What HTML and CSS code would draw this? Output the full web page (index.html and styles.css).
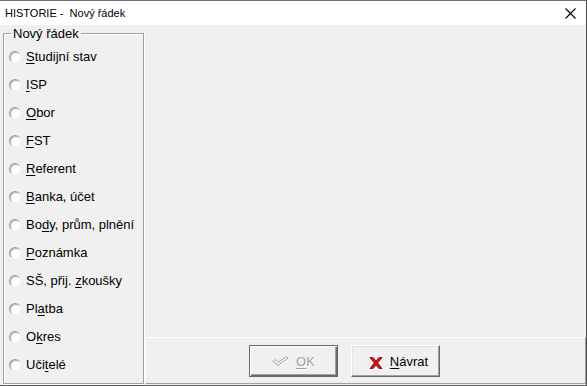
FILE: index.html
```html
<!DOCTYPE html>
<html lang="cs">
<head>
<meta charset="utf-8">
<title>HISTORIE - Nový řádek</title>
<link rel="stylesheet" href="styles.css">
</head>
<body>
<div class="window">
  <div class="titlebar">
    <span class="title">HISTORIE -  Nový řádek</span>
    <svg class="close" width="11" height="11" viewBox="0 0 11 11"><path d="M0.5 0.5 L10.5 10.5 M10.5 0.5 L0.5 10.5" stroke="#000" stroke-width="1.1" fill="none"/></svg>
  </div>
  <div class="client">
    <div class="left">
      <div class="group">
        <span class="legend">Nový řádek</span>
        <div class="opt"><span class="radio"></span><span class="lbl"><u>S</u>tudijní stav</span></div>
        <div class="opt"><span class="radio"></span><span class="lbl"><u>I</u>SP</span></div>
        <div class="opt"><span class="radio"></span><span class="lbl"><u>O</u>bor</span></div>
        <div class="opt"><span class="radio"></span><span class="lbl"><u>F</u>ST</span></div>
        <div class="opt"><span class="radio"></span><span class="lbl"><u>R</u>eferent</span></div>
        <div class="opt"><span class="radio"></span><span class="lbl"><u>B</u>anka, účet</span></div>
        <div class="opt"><span class="radio"></span><span class="lbl">Bo<u>d</u>y, prům, plnění</span></div>
        <div class="opt"><span class="radio"></span><span class="lbl"><u>P</u>oznámka</span></div>
        <div class="opt"><span class="radio"></span><span class="lbl">SŠ, přij. <u>z</u>koušky</span></div>
        <div class="opt"><span class="radio"></span><span class="lbl">Pl<u>a</u>tba</span></div>
        <div class="opt"><span class="radio"></span><span class="lbl">O<u>k</u>res</span></div>
        <div class="opt"><span class="radio"></span><span class="lbl">Uči<u>t</u>elé</span></div>
      </div>
    </div>
    <div class="right">
      <div class="spacer"></div>
      <div class="panel">
        <button class="btn btn-default" disabled>
          <svg class="ico-check" width="18" height="12" viewBox="0 0 18 12">
            <path transform="translate(1,1)" d="M1 5.5 L3 3.5 L6 6.5 L14.5 0.5 L16 2 L6 9.5 Z" fill="none" stroke="#ffffff" stroke-width="1"/>
            <path d="M1 5.5 L3 3.5 L6 6.5 L14.5 0.5 L16 2 L6 9.5 Z" fill="none" stroke="#a0a0a0" stroke-width="1"/>
          </svg>
          <span class="btn-text disabled-text"><u>O</u>K</span>
        </button>
        <button class="btn btn-back">
          <svg class="ico-x" width="14" height="12" viewBox="0 0 14 12">
            <path d="M1 0.5 L4 0.5 L7 4 L10 0.5 L13 0.5 L8.7 6 L13 11.5 L10 11.5 L7 8 L4 11.5 L1 11.5 L5.3 6 Z" fill="#d11515" stroke="#7a0000" stroke-width="0.8" stroke-linejoin="round"/>
          </svg>
          <span class="btn-text"><u>N</u>ávrat</span>
        </button>
      </div>
    </div>
  </div>
</div>
</body>
</html>
```
FILE: styles.css
```css
html, body {
  margin: 0;
  padding: 0;
  background: #ffffff;
}

body {
  font-family: "Liberation Sans", Arial, sans-serif;
  color: #000;
}

.window {
  width: 587px;
  height: 386px;
  box-sizing: border-box;
  border-top: 1px solid #6e6e6e;
  border-right: 1px solid #4a4a4a;
  border-bottom: 1px solid #5a5a5a;
  display: flex;
  flex-direction: column;
  overflow: hidden;
}

.titlebar {
  height: 24px;
  box-sizing: border-box;
  padding: 1px 0 0 5px;
  background: #ffffff;
  display: flex;
  align-items: flex-start;
}

.title {
  font-size: 11px;
  line-height: 23px;
  white-space: pre;
}

.close {
  margin-left: auto;
  margin-right: 10px;
  margin-top: 6px;
  display: block;
}

.client {
  height: 360px;
  background: #f0f0f0;
  display: flex;
}

.left {
  width: 145px;
  box-sizing: border-box;
  padding: 8px 0 0 3px;
}

.group {
  position: relative;
  width: 141px;
  height: 351px;
  box-sizing: border-box;
  border: 1px solid #a0a0a0;
  box-shadow: 1px 1px 0 #ffffff, inset 1px 1px 0 #ffffff;
  padding: 9px 0 0 5px;
}

.legend {
  position: absolute;
  left: 7px;
  top: -8px;
  padding: 0 2px;
  background: #f0f0f0;
  font-size: 13px;
  line-height: 15px;
}

.opt {
  height: 28px;
  display: flex;
  align-items: center;
  font-size: 13px;
  line-height: 28px;
  white-space: nowrap;
}

.radio {
  width: 12px;
  height: 12px;
  box-sizing: border-box;
  border-radius: 50%;
  background: #ffffff;
  border: 1px solid;
  border-color: #a0a0a0 #f4f4f4 #f4f4f4 #a0a0a0;
  box-shadow: inset 1px 1px 0 #b4b4b4;
  margin-right: 5px;
  flex: none;
}

.lbl u, .btn-text u {
  text-decoration: underline;
  text-underline-offset: 2px;
}

.right {
  width: 441px;
  display: flex;
  flex-direction: column;
}

.spacer {
  flex: 1;
}

.panel {
  height: 47px;
  margin-bottom: 1px;
  box-sizing: border-box;
  border-top: 1px solid #ffffff;
  border-left: 1px solid #ffffff;
  border-right: 1px solid #a0a0a0;
  border-bottom: 1px solid #a0a0a0;
  padding: 7px 0 0 103px;
  display: flex;
  align-items: flex-start;
  gap: 13px;
}

.btn {
  width: 89px;
  height: 32px;
  box-sizing: border-box;
  margin: 0;
  padding: 0;
  background: #f0f0f0;
  font-family: "Liberation Sans", Arial, sans-serif;
  font-size: 13px;
  line-height: 15px;
  color: #000;
  display: flex;
  align-items: center;
  justify-content: center;
  gap: 6px;
  border: 1px solid;
  border-color: #ffffff #696969 #696969 #ffffff;
  box-shadow: inset -1px -1px 0 #a0a0a0, inset 1px 1px 0 #e3e3e3;
}

.btn-default {
  border-color: #696969;
  box-shadow: inset 1px 1px 0 #ffffff, inset -1px -1px 0 #696969, inset -2px -2px 0 #a0a0a0;
}

.btn-back {
  padding-left: 6px;
  gap: 7px;
}

.ico-check, .ico-x {
  display: block;
  flex: none;
}

.ico-x {
  margin-top: 3px;
}

.ico-check {
  margin-top: 2px;
}

.disabled-text {
  color: #a0a0a0;
  text-shadow: 1px 1px 0 #ffffff;
}
```
